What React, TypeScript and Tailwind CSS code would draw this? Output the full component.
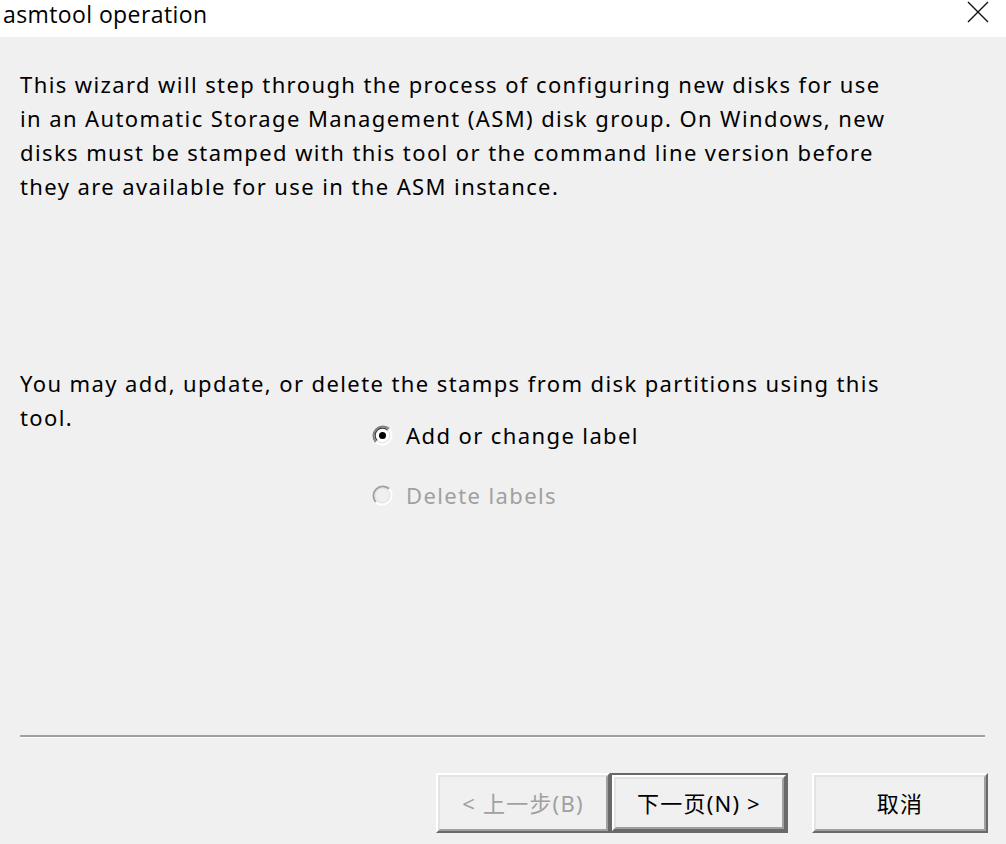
import React from 'react';

const bodyFont = { fontFamily: '"Noto Sans", "Noto Sans CJK SC", sans-serif' };

const Radio = ({ checked, disabled }: { checked?: boolean; disabled?: boolean }) => (
  <svg width="21" height="21" viewBox="0 0 21 21" className="shrink-0">
    <circle cx="10.5" cy="10.5" r="9.5" fill={disabled ? '#f0f0f0' : '#ffffff'} />
    <path d="M3.8 17.2 A9.5 9.5 0 0 1 17.2 3.8" fill="none" stroke={disabled ? '#a0a0a0' : '#808080'} strokeWidth="2" />
    <path d="M17.2 3.8 A9.5 9.5 0 0 1 3.8 17.2" fill="none" stroke="#ffffff" strokeWidth="2" />
    <path d="M5.3 15.7 A7.3 7.3 0 0 1 15.7 5.3" fill="none" stroke={disabled ? '#e3e3e3' : '#404040'} strokeWidth="1.2" />
    <path d="M15.7 5.3 A7.3 7.3 0 0 1 5.3 15.7" fill="none" stroke="#e3e3e3" strokeWidth="1.2" />
    {checked && <circle cx="10.5" cy="10.5" r="3.5" fill="#000000" />}
  </svg>
);

const WinButton = ({ label, disabled, isDefault, width }: { label: string; disabled?: boolean; isDefault?: boolean; width: string }) => (
  <div className={`${width} h-[60px] ${isDefault ? 'border-2 border-[#696969]' : ''}`}>
    <div className="h-full border-2 border-t-white border-l-white border-r-[#696969] border-b-[#696969]">
      <div className="h-full border-2 border-t-[#e3e3e3] border-l-[#e3e3e3] border-r-[#a0a0a0] border-b-[#a0a0a0] flex items-center justify-center">
        <span className={`text-[22px] tracking-[1.2px] ${disabled ? 'text-[#a0a0a0]' : 'text-black'}`} style={bodyFont}>{label}</span>
      </div>
    </div>
  </div>
);

export default function App() {
  return (
    <div className="w-[1006px] h-[844px] bg-[#f0f0f0] flex flex-col overflow-hidden">
      <div className="h-[37px] bg-white flex items-start justify-between shrink-0">
        <span className="pl-[3px] pt-[1px] text-[23px] leading-[26px] tracking-[0.4px] text-black" style={{ fontFamily: '"Open Sans", "Noto Sans", sans-serif' }}>
          asmtool operation
        </span>
        <svg width="22" height="22" viewBox="0 0 22 22" className="mr-[17px] mt-[1px]">
          <path d="M1 1 L21 21 M21 1 L1 21" stroke="#111111" strokeWidth="1.4" fill="none" />
        </svg>
      </div>

      <div className="flex flex-col pl-[20px] pr-[20px] pt-[30px] text-[22px] leading-[34px] tracking-[1.4px] text-black" style={bodyFont}>
        <p className="whitespace-nowrap">
          This wizard will step through the process of configuring new disks for use<br />
          in an Automatic Storage Management (ASM) disk group. On Windows, new<br />
          disks must be stamped with this tool or the command line version before<br />
          they are available for use in the ASM instance.
        </p>

        <p className="mt-[163px] whitespace-nowrap">You may add, update, or delete the stamps from disk partitions using this</p>
        <div className="flex items-start">
          <span className="w-[352px]">tool.</span>
          <div className="flex flex-col gap-[26px] mt-[18px]">
            <label className="flex items-center gap-[13px] h-[34px]">
              <Radio checked />
              <span>Add or change label</span>
            </label>
            <label className="flex items-center gap-[13px] h-[34px] text-[#a0a0a0]">
              <Radio disabled />
              <span>Delete labels</span>
            </label>
          </div>
        </div>

        <div className="mt-[223px] w-[965px] border-t-2 border-t-[#a0a0a0] border-b border-b-white" />

        <div className="flex justify-end mt-[35px] w-[968px]">
          <WinButton label="< 上一步(B)" disabled width="w-[174px]" />
          <WinButton label="下一页(N) >" isDefault width="w-[178px]" />
          <div className="w-[24px]" />
          <WinButton label="取消" width="w-[176px]" />
        </div>
      </div>
    </div>
  );
}
